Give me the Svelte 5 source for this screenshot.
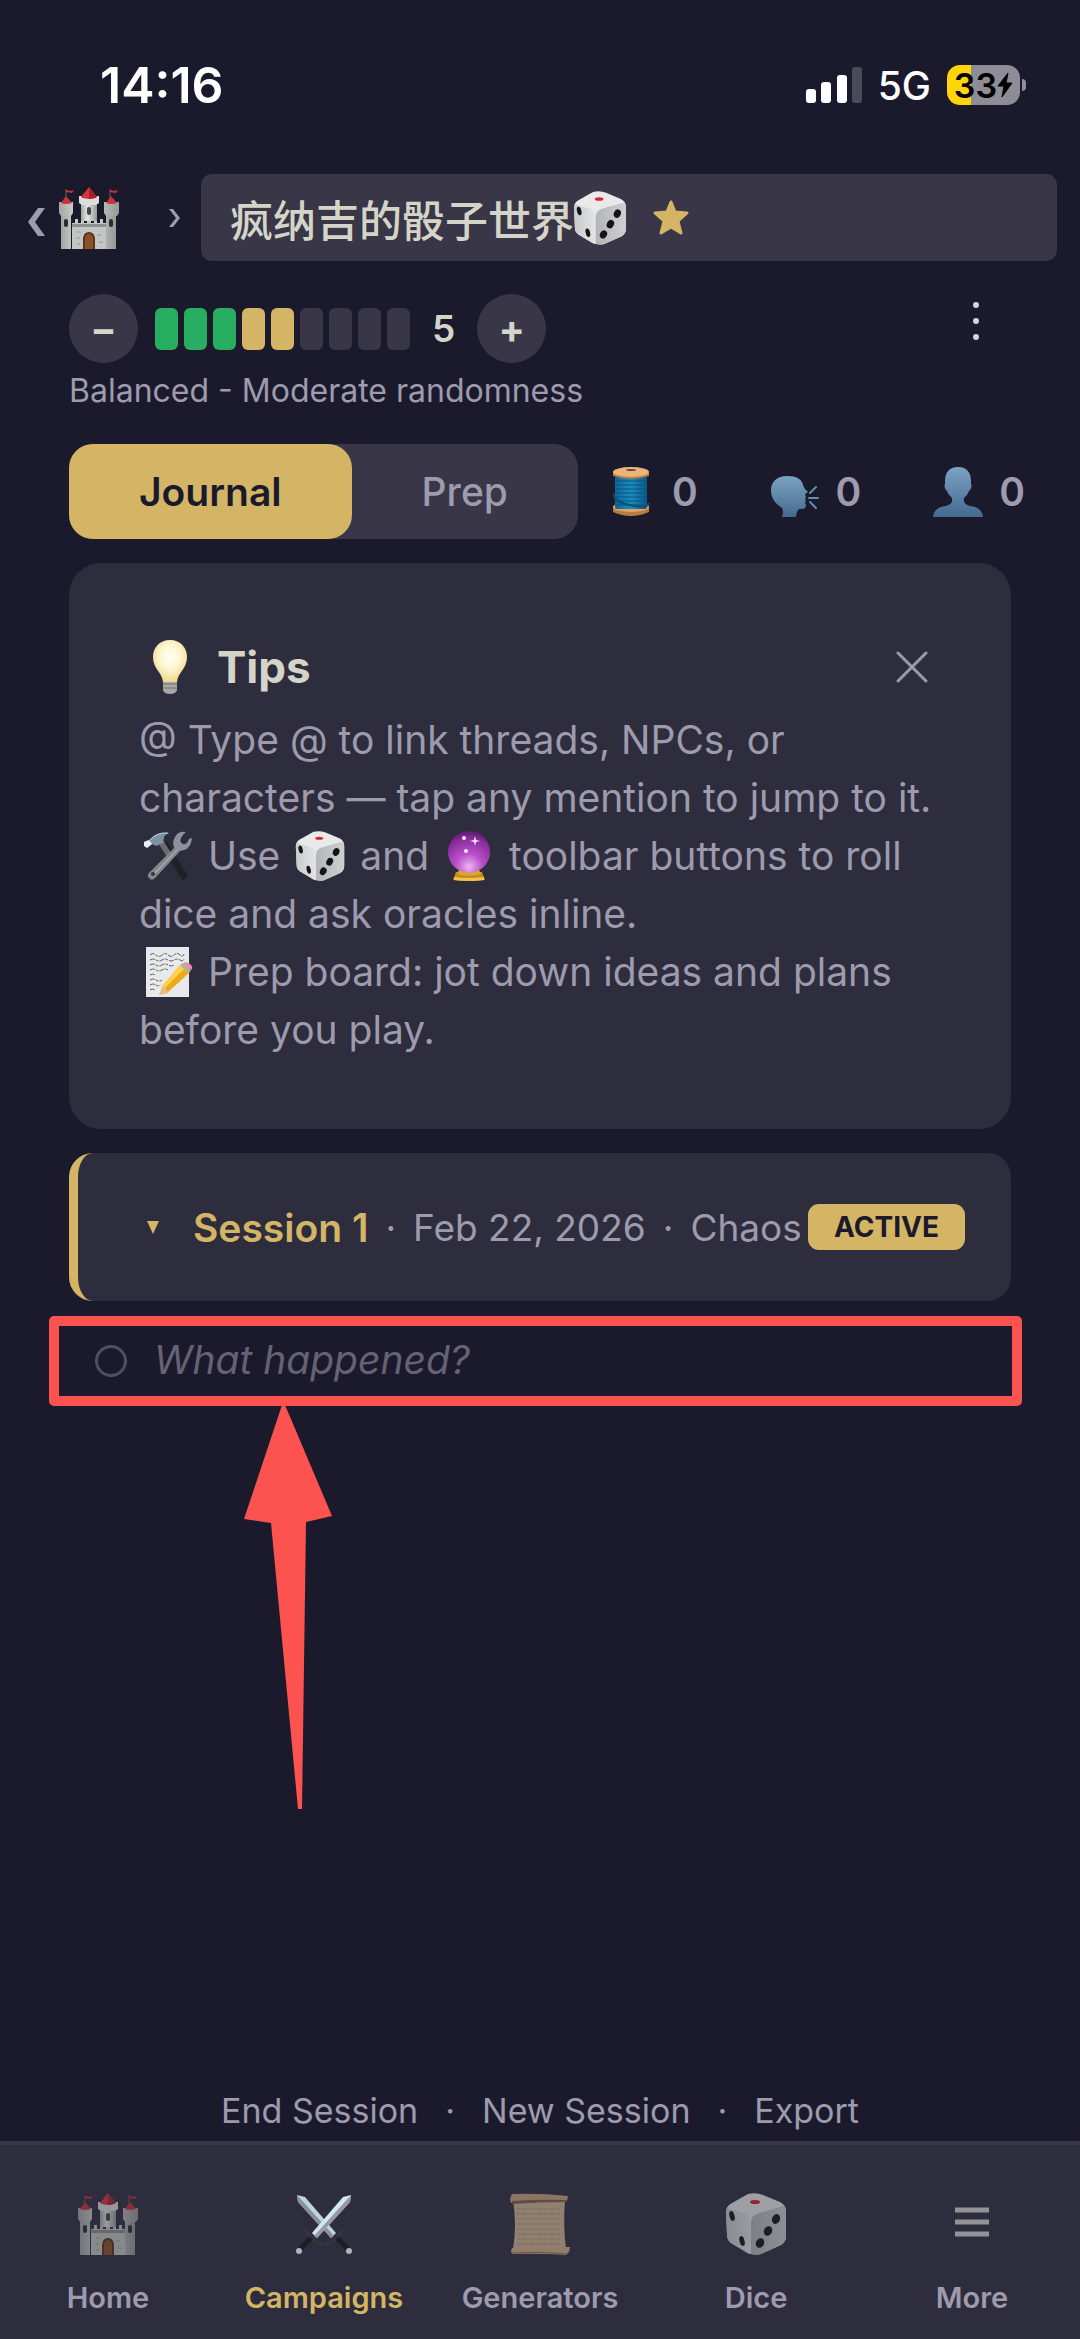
<script lang="ts">
  let chaos = $state(5);
  let tab = $state('journal');
  let showTips = $state(true);
  let entry = $state('');

  const levels = [1, 2, 3, 4, 5, 6, 7, 8, 9];

  const counters = [
    { name: 'Threads', icon: spool, value: 0 },
    { name: 'NPCs', icon: speaking, value: 0 },
    { name: 'Characters', icon: bust, value: 0 }
  ];

  const navItems = [
    { name: 'Home', icon: castle },
    { name: 'Campaigns', icon: swords, active: true },
    { name: 'Generators', icon: scroll },
    { name: 'Dice', icon: dice },
    { name: 'More', icon: menu }
  ];

  function changeChaos(step: number) {
    chaos = Math.min(9, Math.max(1, chaos + step));
  }
</script>

{#snippet castle()}
  <svg class="icon" viewBox="0 0 60 62" aria-hidden="true">
    <path d="M7 2v10M51 2v10" stroke="#6b5a50" stroke-width="1" />
    <path d="M7 3l4 1 4-1-2 3-6-1zM51 3l4 1 4-1-2 3-6-1z" fill="#d3303a" />
    <path d="M13 36h3v-4h3v4h3v-3h3v3h3v-3h4v3h3v-3h3v3h3v-4h3v4h3v26H13z" fill="#c3c6c2" />
    <path d="M13 37h34v3H13z" fill="#8d918f" />
    <path d="M22 14h16v20H22z" fill="url(#stone)" />
    <path d="M20 9h3v2h4V9h6v2h4V9h3v7l-3 2H23l-3-2z" fill="#dcdedb" />
    <path d="M30 0l8 10q-8 4-16 0z" fill="#d9343b" />
    <path d="M30 0l8 10q-4 2-8 2z" fill="#a3232b" />
    <path d="M2 25h10v37H2zM47 25h10v37H47z" fill="url(#stone)" />
    <path d="M0 15h14v11l-2 3H2l-2-3zM45 15h15v11l-2 3H47l-2-3z" fill="url(#stone)" />
    <path d="M7 9l6 7q-6 2-11 0zM52 9l6 7q-6 2-11 0z" fill="#c9333a" />
    <path d="M24 62V51q1-6 6-6t6 6v11z" fill="#5a341c" />
    <path d="M26 62V51q1-4 4-4t4 4v11z" fill="#8a5327" />
    <rect x="5" y="32" width="4" height="8" rx="2" fill="#2b2d33" />
    <rect x="50" y="32" width="4" height="8" rx="2" fill="#2b2d33" />
    <rect x="28" y="20" width="4" height="8" rx="2" fill="#43464b" />
    <path d="M18 45h4M17 51h4M38 48h4M40 55h4M18 57h3" stroke="#96999a" stroke-width="1" />
  </svg>
{/snippet}

{#snippet dice()}
  <svg class="icon" viewBox="0 0 60 62" aria-hidden="true">
    <path d="M22 1q8-2 15 1l17 7q6 3 6 9v25q0 6-5 9l-20 9q-8 2-15-2L5 50q-4-3-4-8L0 19q0-6 6-9z" fill="#e9e9ea" />
    <path d="M1 15l17 5q7 3 7 10v31q-3 0-5-2L5 50q-4-3-4-8L0 19z" fill="url(#diceLeft)" />
    <path d="M25 30q0-8 8-10l25-7q2 2 2 5v25q0 6-5 9l-20 9q-5 1-10 0z" fill="url(#diceRight)" />
    <ellipse cx="29" cy="9" rx="5" ry="2" fill="#d8222a" />
    <g fill="#141416">
      <ellipse cx="6" cy="23" rx="2.5" ry="5" transform="rotate(-14 6 23)" />
      <ellipse cx="16" cy="48" rx="2.5" ry="5" transform="rotate(-14 16 48)" />
      <ellipse cx="50" cy="26" rx="4" ry="5" transform="rotate(22 50 26)" />
      <ellipse cx="42" cy="38" rx="4" ry="5" transform="rotate(28 42 38)" />
      <ellipse cx="34" cy="50" rx="4" ry="5" transform="rotate(28 34 50)" />
    </g>
  </svg>
{/snippet}

{#snippet swords()}
  <svg class="icon" viewBox="0 0 60 62" aria-hidden="true">
    <path d="M3 2l8 2 31 36-5 5L4 9z" fill="#b9d5de" />
    <path d="M3 2l37 41-3 2L4 9z" fill="#8f8c9c" />
    <path d="M57 2l-8 2-31 36 5 5L56 9z" fill="#cfe9f0" />
    <path d="M57 2L20 43l3 2L56 9z" fill="#9a95a6" />
    <path d="M12 36q3 13 17 15M48 36q-3 13-17 15" fill="none" stroke="#34373c" stroke-width="3" />
    <path d="M17 45L6 56M43 45l11 11" stroke="#1d1f25" stroke-width="5" />
    <circle cx="5" cy="58" r="3" fill="#b4b0b8" />
    <circle cx="55" cy="58" r="3" fill="#b4b0b8" />
  </svg>
{/snippet}

{#snippet scroll()}
  <svg class="icon" viewBox="0 0 60 62" aria-hidden="true">
    <path d="M3 7h52q-2 25 1 49H3q4-24 0-49z" fill="#d3b792" />
    <path d="M2 1q28-1 56 2l-1 5Q29 7 1 10q-2-5 1-9z" fill="#cba67c" />
    <path d="M2 8q27-2 55-1v2Q30 9 2 11z" fill="#80644a" />
    <path d="M2 55q28-1 58-1l-1 5-3 3Q29 60 2 61l-1-3z" fill="#d6b389" />
    <path d="M2 60q28-2 55 1" fill="none" stroke="#8d6d4e" stroke-width="1" />
    <path d="M7 16h43M7 21h44M7 26h44M7 31h43M7 36h44M7 41h43M7 46h44M7 51h44" stroke="#b6976f" stroke-width="1" stroke-dasharray="4 1 7 1" />
  </svg>
{/snippet}

{#snippet menu()}
  <svg class="icon" viewBox="0 0 60 62" aria-hidden="true">
    <path d="M13 17h34M13 29h34M13 41h34" stroke="#d8d8d3" stroke-width="5" />
  </svg>
{/snippet}

{#snippet spool()}
  <svg class="icon" viewBox="0 0 50 50" aria-hidden="true">
    <path d="M7 40h36v5q-18 8-36 0z" fill="#b97a42" />
    <ellipse cx="25" cy="40" rx="18" ry="5" fill="#e0a566" />
    <rect x="9" y="9" width="32" height="33" rx="2" fill="url(#thread)" />
    <path d="M10 14h30M10 18h30M10 22h30M10 26h30M10 30h30M10 34h30M10 38h30" stroke="#07567f" stroke-width="1" />
    <path d="M8 27q-1 9 21 12 13 2 14-3" fill="none" stroke="#0e4e72" stroke-width="2" />
    <path d="M7 5h36v4q-18 6-36 0z" fill="#bd7b41" />
    <ellipse cx="25" cy="5" rx="18" ry="5" fill="#eab57a" />
    <ellipse cx="25" cy="3" rx="5" ry="1" fill="#71492a" />
  </svg>
{/snippet}

{#snippet speaking()}
  <svg class="icon" viewBox="0 0 50 50" aria-hidden="true">
    <path d="M17 9C7 9 1 15 1 23c0 9 5 14 10 17 3 3 2 6 1 10h14c0-3 1-6 3-8h4q3-1 3-4l-1-3 1-1-1-2 1-2-1-3 3-2q-4-3-5-7-2-9-16-9z" fill="url(#person)" />
    <path d="M40 26l6-6M39 31h9M40 35l6 6" stroke="#5f8fae" stroke-width="2" stroke-linecap="round" />
  </svg>
{/snippet}

{#snippet bust()}
  <svg class="icon" viewBox="0 0 50 50" aria-hidden="true">
    <path d="M25 0c-9 0-13 6-13 14v3q-1 1 0 4t2 3c1 3 3 5 5 7 1 5-2 7-6 8C6 40 1 42 0 50h50c-1-8-6-10-13-11-4-1-7-3-6-8 2-2 4-4 5-7q1 0 2-3t0-4v-3C38 6 34 0 25 0z" fill="url(#person)" />
  </svg>
{/snippet}

{#snippet tools()}
  <svg class="icon" viewBox="0 0 50 50" aria-hidden="true">
    <path d="M17 14l7-3 21 34-5 5z" fill="#202126" />
    <path d="M15 12l5-3 10 16-4 4z" fill="#6a6a70" />
    <path d="M34 14l5 4L13 46q-4 5-7 1-3-3 1-6z" fill="#85868e" />
    <path d="M35 14l2 2L10 44" fill="none" stroke="#c3c4ca" stroke-width="1" />
    <path d="M43 1q-8-1-11 5-3 5-1 10 4 5 10 3 7-2 8-12l-3 1q-2 6-6 5-4-2-2-6 1-3 5-6z" fill="#8f909b" />
    <circle cx="10" cy="43" r="2" fill="#34343e" />
    <path d="M1 11l5-2Q14 0 27 2q-5 1-6 4l-1 6-7 3-4-2-5 4z" fill="#7b93a5" />
    <path d="M1 11l5-2 3 4-5 4-3-2z" fill="#e4f2f7" />
    <path d="M7 9Q14 1 25 2" fill="none" stroke="#c0d2dc" stroke-width="1" />
  </svg>
{/snippet}

{#snippet crystalBall()}
  <svg class="icon" viewBox="0 0 50 50" aria-hidden="true">
    <path d="M12 41h26l3 8q-16 2-32 0z" fill="#c98a1d" />
    <path d="M10 46q15 2 30 0v3q-15 2-30 0z" fill="#f0c34a" />
    <circle cx="25" cy="21" r="21" fill="url(#crystal)" />
    <path d="M15 39q10 6 20 0l2 4q-12 3-24 0z" fill="#dba632" />
    <path d="M31 5l1 4 4 1-4 1-1 4-1-4-4-1 4-1z" fill="#fbe5ff" />
    <circle cx="20" cy="7" r="2" fill="#fbe5ff" />
    <circle cx="22" cy="20" r="2" fill="#fbe5ff" />
  </svg>
{/snippet}

{#snippet memo()}
  <svg class="icon" viewBox="0 0 50 50" aria-hidden="true">
    <path d="M3 0h43v50H3z" fill="#e8e9ea" />
    <path d="M7 8q3-3 6 0t6 0 6 0 6 0 6 0 4-1M7 13q3-2 6 0t6 0 6 0 6 0 6 0 4-1M7 18q3-2 6 0t6 0 6 0 6 0M7 23q3-2 6 0t6 0 6 0M7 28q3-2 5 0M7 33q3-2 6 0t6 0M7 38q3-2 6 0t4 0M7 43q3-2 5 0" fill="none" stroke="#5d5f63" stroke-width="1" stroke-dasharray="5 1 3 1" />
    <path d="M37 18l9 8-22 20-8 2 4-9z" fill="#eda91b" />
    <path d="M37 18l4 4-21 21-1-4z" fill="#ffd04a" />
    <path d="M20 39l5 6-9 3z" fill="#e3bf93" />
    <path d="M37 18l3-2 8 7-2 3z" fill="#a9b0b3" />
    <path d="M40 16q4-2 7 1 4 3 1 6z" fill="#ee8c98" />
  </svg>
{/snippet}

{#snippet bulb()}
  <svg class="icon" viewBox="0 0 54 54" aria-hidden="true">
    <path d="M20 41h14v9q-1 4-7 4t-7-4z" fill="#a9a7a4" />
    <path d="M20 44h14M20 48h14" stroke="#77767a" stroke-width="1" />
    <path d="M27 0C16 0 10 8 10 17c0 12 9 15 10 25h14c1-10 10-13 10-25C44 8 38 0 27 0z" fill="url(#glow)" />
  </svg>
{/snippet}

<!-- shared gradients for the icons above -->
<svg class="defs" width="0" height="0" aria-hidden="true">
  <defs>
    <linearGradient id="stone">
      <stop offset="0" stop-color="#a2a5a4" />
      <stop offset="0.4" stop-color="#e6e7e2" />
      <stop offset="1" stop-color="#969998" />
    </linearGradient>
    <linearGradient id="diceLeft">
      <stop offset="0" stop-color="#c9cacc" />
      <stop offset="1" stop-color="#e4e4e5" />
    </linearGradient>
    <linearGradient id="diceRight" x1="0" y1="0" x2="1" y2="0">
      <stop offset="0" stop-color="#b4b5b7" />
      <stop offset="1" stop-color="#cfcfd1" />
    </linearGradient>
    <linearGradient id="thread">
      <stop offset="0" stop-color="#0d6598" />
      <stop offset="0.5" stop-color="#1a8cc4" />
      <stop offset="1" stop-color="#0b5683" />
    </linearGradient>
    <linearGradient id="person" x1="0" y1="0" x2="0" y2="1">
      <stop offset="0" stop-color="#7ba3c2" />
      <stop offset="1" stop-color="#44698f" />
    </linearGradient>
    <radialGradient id="crystal" cx="0.5" cy="0.85" r="0.9">
      <stop offset="0" stop-color="#f0b4f5" />
      <stop offset="0.35" stop-color="#b850c8" />
      <stop offset="0.75" stop-color="#8a2b9c" />
      <stop offset="1" stop-color="#4c1763" />
    </radialGradient>
    <radialGradient id="glow" cx="0.5" cy="0.4" r="0.6">
      <stop offset="0" stop-color="#fffef5" />
      <stop offset="0.5" stop-color="#fff5cf" />
      <stop offset="1" stop-color="#f0d888" />
    </radialGradient>
  </defs>
</svg>

<div class="app">
  <div class="status-bar">
    <span class="clock">14:16</span>
    <svg class="signal" viewBox="0 0 56 36" aria-hidden="true">
      <rect x="0" y="22" width="10" height="14" rx="3" fill="#fff" />
      <rect x="15" y="15" width="10" height="21" rx="3" fill="#fff" />
      <rect x="31" y="8" width="10" height="28" rx="3" fill="#fff" />
      <rect x="46" y="0" width="10" height="36" rx="3" fill="#4b4a5a" />
    </svg>
    <span class="network">5G</span>
    <div class="battery">
      <span>33</span>
      <svg viewBox="0 0 16 24" aria-hidden="true"><path d="M11 0L1 13h6L5 24l10-14H9z" fill="#000" stroke="#000" stroke-linejoin="round" /></svg>
    </div>
    <div class="battery-tip"></div>
  </div>

  <header>
    <button class="back" aria-label="Back">
      <svg viewBox="0 -4 17 36" aria-hidden="true"><path d="M10 4h7L7 18l10 14h-7L0 18z" fill="#9d9bb3" /></svg>
      {@render castle()}
    </button>
    <svg class="crumb" viewBox="0 0 11 18" aria-hidden="true"><path d="M0 0h4l7 9-7 9H0l7-9z" fill="#9d9bb3" /></svg>
    <button class="campaign">
      <span>疯纳吉的骰子世界</span>
      {@render dice()}
      <svg class="star" viewBox="0 0 36 36" aria-hidden="true">
        <path d="M18 2l4 10 12 1-9 8 3 12-10-6-10 6 3-12-9-8 12-1z" fill="#d4b565" stroke="#d4b565" stroke-width="3" stroke-linejoin="round" />
      </svg>
    </button>
  </header>

  <main>
    <div class="chaos">
      <button class="round" aria-label="Lower chaos" onclick={() => changeChaos(-1)}>−</button>
      <div class="meter">
        {#each levels as level}
          <span class:low={level <= chaos && level <= 3} class:mid={level <= chaos && level > 3}></span>
        {/each}
      </div>
      <span class="chaos-value">{chaos}</span>
      <button class="round" aria-label="Raise chaos" onclick={() => changeChaos(1)}>+</button>
      <button class="options" aria-label="Options">
        <svg viewBox="0 0 6 38" aria-hidden="true">
          <circle cx="3" cy="3" r="3" /><circle cx="3" cy="19" r="3" /><circle cx="3" cy="35" r="3" />
        </svg>
      </button>
    </div>
    <p class="chaos-note">Balanced - Moderate randomness</p>

    <div class="toolbar">
      <div class="tabs">
        <button class:selected={tab === 'journal'} onclick={() => (tab = 'journal')}>Journal</button>
        <button class:selected={tab === 'prep'} onclick={() => (tab = 'prep')}>Prep</button>
      </div>
      <div class="counters">
        {#each counters as counter}
          <button class="counter" aria-label={counter.name}>
            {@render counter.icon()}
            <span>{counter.value}</span>
          </button>
        {/each}
      </div>
    </div>

    {#if showTips}
      <section class="tips">
        <div class="tips-head">
          {@render bulb()}
          <h2>Tips</h2>
          <button class="close" aria-label="Close tips" onclick={() => (showTips = false)}>
            <svg viewBox="0 0 32 32" aria-hidden="true"><path d="M2 2l28 28M30 2L2 30" stroke="#9d9bad" stroke-width="3" stroke-linecap="round" /></svg>
          </button>
        </div>
        <p>@ Type @ to link threads, NPCs, or characters — tap any mention to jump to it.</p>
        <p>{@render tools()} Use {@render dice()} and {@render crystalBall()} toolbar buttons to roll dice and ask oracles inline.</p>
        <p>{@render memo()} Prep board: jot down ideas and plans before you play.</p>
      </section>
    {/if}

    <section class="session">
      <svg class="caret" viewBox="0 0 12 13" aria-hidden="true"><path d="M0 0h12L6 13z" fill="#d4b565" /></svg>
      <strong>Session 1</strong>
      <span class="session-meta"><i>·</i>Feb 22, 2026<i>·</i>Chaos</span>
      <span class="badge">ACTIVE</span>
    </section>

    <div class="entry">
      <span class="bullet"></span>
      <input type="text" placeholder="What happened?" aria-label="What happened?" bind:value={entry} />
      <svg class="pointer" viewBox="0 0 88 404" aria-hidden="true">
        <path d="M38 0h3l47 111-26 6-4 287h-4L27 118 0 114z" fill="#fc5250" />
      </svg>
    </div>
  </main>

  <div class="actions">
    <button>End Session</button>
    <span>·</span>
    <button>New Session</button>
    <span>·</span>
    <button>Export</button>
  </div>

  <nav>
    {#each navItems as item}
      <a href="#{item.name.toLowerCase()}" class:active={item.active}>
        {@render item.icon()}
        <span>{item.name}</span>
      </a>
    {/each}
  </nav>
</div>

<style>
  :global(body) {
    background: #1b1a2d;
  }

  .defs {
    position: absolute;
  }

  .app {
    min-height: 100vh;
    box-sizing: border-box;
    display: flex;
    flex-direction: column;
    background: #1b1a2d;
    color: #9d9bad;
    font-family: Inter, "Noto Sans CJK SC", sans-serif;
    font-size: 39px;
  }

  button {
    padding: 0;
    border: none;
    background: none;
    color: inherit;
    font: inherit;
    cursor: pointer;
  }

  svg {
    display: block;
    flex: none;
  }

  /* phone status bar */
  .status-bar {
    display: flex;
    align-items: center;
    height: 58px;
    padding: 56px 54px 60px 100px;
    color: #fff;
  }

  .clock {
    flex: 1;
    font-size: 50px;
    font-weight: 600;
  }

  .signal {
    width: 56px;
    height: 36px;
  }

  .network {
    margin: 0 16px;
    font-weight: 500;
  }

  .battery {
    display: flex;
    align-items: center;
    justify-content: center;
    width: 73px;
    height: 40px;
    border-radius: 13px;
    background: linear-gradient(90deg, #ffd50a 24px, #8d8c97 24px);
    color: #000;
    font-size: 34px;
    font-weight: 600;
  }

  .battery svg {
    width: 16px;
    height: 24px;
  }

  .battery-tip {
    width: 4px;
    height: 12px;
    margin-left: 2px;
    border-radius: 0 6px 6px 0;
    background: #8d8c97;
  }

  header {
    display: flex;
    align-items: center;
    padding: 0 23px 0 28px;
  }

  .back {
    display: flex;
    align-items: center;
    gap: 14px;
  }

  .back > svg:first-child {
    width: 17px;
    height: 36px;
  }

  .back .icon {
    width: 60px;
    height: 62px;
  }

  .crumb {
    width: 11px;
    height: 18px;
    margin: 0 21px 0 50px;
  }

  .campaign {
    flex: 1;
    display: flex;
    align-items: center;
    height: 87px;
    padding: 0 29px;
    border-radius: 11px;
    background: #383647;
    color: #d4d5c8;
    font-size: 43px;
    font-weight: 500;
  }

  .campaign .icon {
    width: 52px;
    height: 54px;
  }

  .star {
    width: 36px;
    height: 36px;
    margin-left: 27px;
  }

  main {
    padding: 33px 69px 0;
  }

  .chaos {
    display: flex;
    align-items: center;
  }

  .round {
    width: 69px;
    height: 69px;
    border-radius: 50%;
    background: #383647;
    color: #d4d5c8;
    font-weight: 700;
  }

  .meter {
    display: flex;
    gap: 6px;
    margin: 0 22px 0 17px;
  }

  .meter span {
    width: 23px;
    height: 42px;
    border-radius: 6px;
    background: #383647;
  }

  .meter .low {
    background: #27ae60;
  }

  .meter .mid {
    background: #d4b565;
  }

  .chaos-value {
    margin-right: 22px;
    color: #d4d5c8;
    font-size: 37px;
    font-weight: 600;
  }

  .options {
    align-self: flex-start;
    margin: 8px 32px 0 auto;
  }

  .options svg {
    width: 6px;
    height: 38px;
    fill: #d4d5d5;
  }

  .chaos-note {
    margin: 8px 0 33px;
    font-size: 32px;
    line-height: 40px;
  }

  .toolbar {
    display: flex;
    align-items: center;
    margin-right: -14px;
  }

  .tabs {
    display: flex;
    border-radius: 24px;
    background: #383647;
  }

  .tabs button {
    height: 95px;
    padding: 0 70px;
    border-radius: 24px;
    font-weight: 500;
  }

  .tabs .selected {
    background: #d4b565;
    color: #1b1a2d;
    font-weight: 600;
  }

  .counters {
    flex: 1;
    display: flex;
    justify-content: space-between;
    margin-left: 28px;
  }

  .counter {
    display: flex;
    align-items: center;
    gap: 16px;
    font-weight: 600;
  }

  .counter .icon {
    width: 50px;
    height: 50px;
  }

  .tips,
  .session {
    margin-top: 24px;
    border-radius: 24px;
    background: #2e2d3d;
  }

  .tips {
    padding: 70px;
    border-radius: 32px;
  }

  .tips-head {
    display: flex;
    align-items: center;
    height: 68px;
    margin-bottom: 10px;
  }

  .tips-head .icon {
    width: 62px;
    height: 54px;
  }

  h2 {
    flex: 1;
    margin: 0 0 0 16px;
    color: #d4d5c8;
    font-size: 44px;
    font-weight: 700;
  }

  .close {
    margin-right: 13px;
  }

  .close svg {
    width: 32px;
    height: 32px;
  }

  .tips p {
    margin: 0;
    line-height: 58px;
  }

  .tips p .icon {
    display: inline-block;
    width: 50px;
    height: 50px;
    margin: 0 4px;
    vertical-align: -11px;
  }

  .session {
    display: flex;
    align-items: center;
    height: 148px;
    padding: 0 46px 0 69px;
    border-left: 9px solid #d4b565;
  }

  .caret {
    width: 12px;
    height: 13px;
    margin-right: 34px;
  }

  strong {
    color: #d4b565;
    font-weight: 600;
  }

  .session-meta {
    flex: 1;
    font-size: 37px;
    white-space: nowrap;
  }

  i {
    margin: 0 17px;
    font-style: normal;
  }

  .badge {
    padding: 0 26px;
    border-radius: 11px;
    background: #d4b565;
    color: #1b1a2d;
    font-size: 28px;
    font-weight: 700;
    line-height: 46px;
  }

  .entry {
    position: relative;
    display: flex;
    align-items: center;
    gap: 27px;
    height: 70px;
    margin: 15px -11px 0 -20px;
    padding: 0 36px;
    border: 10px solid #fc5250;
    border-radius: 5px;
  }

  .bullet {
    width: 26px;
    height: 26px;
    border: 3px solid #514f5e;
    border-radius: 50%;
  }

  .entry input {
    flex: 1;
    padding: 0 0 4px;
    border: none;
    outline: none;
    background: none;
    color: #d4d5c8;
    font: inherit;
    font-style: italic;
  }

  .entry input::placeholder {
    color: #656373;
    opacity: 1;
  }

  .pointer {
    position: absolute;
    top: 79px;
    left: 185px;
    width: 88px;
    height: 404px;
  }

  .actions {
    display: flex;
    justify-content: center;
    gap: 27px;
    margin-top: auto;
    padding: 24px 0 8px;
    font-size: 34px;
    line-height: 44px;
  }

  nav {
    display: flex;
    border-top: 4px solid #383647;
    background: #2e2d3d;
  }

  nav a {
    flex: 1;
    display: flex;
    flex-direction: column;
    align-items: center;
    gap: 24px;
    padding: 48px 0 22px;
    color: inherit;
    font-size: 29px;
    font-weight: 600;
    line-height: 38px;
    text-decoration: none;
  }

  nav .icon {
    width: 60px;
    height: 62px;
    opacity: 0.6;
  }

  nav .active {
    color: #d4b565;
  }

  nav .active .icon {
    opacity: 1;
  }
</style>
